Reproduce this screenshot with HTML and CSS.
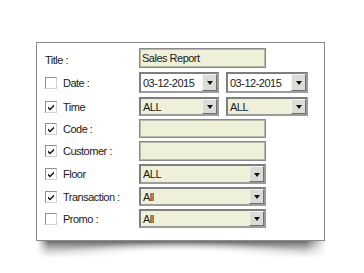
FILE: index.html
```html
<!DOCTYPE html>
<html lang="en">
<head>
    <meta charset="UTF-8">
    <title>Report filter</title>
    <link rel="stylesheet" href="styles.css">
</head>
<body>
    <div class="card">
        <div class="row r-title">
            <label class="lbl">Title :</label>
            <div class="box text wide">Sales Report</div>
        </div>
        <div class="row r-date">
            <label class="lbl"><span class="cb"></span>Date :</label>
            <div class="box select white small">03-12-2015<span class="btn"><i></i></span></div>
            <div class="box select white small2">03-12-2015<span class="btn"><i></i></span></div>
        </div>
        <div class="row r-time">
            <label class="lbl"><span class="cb on"><svg viewBox="0 0 8 8"><path d="M1 3.5 L3 5.5 L7 1.5 L7 3.5 L3 7.5 L1 5.5 Z"/></svg></span>Time</label>
            <div class="box select small">ALL<span class="btn"><i></i></span></div>
            <div class="box select small2">ALL<span class="btn"><i></i></span></div>
        </div>
        <div class="row r-code">
            <label class="lbl"><span class="cb on"><svg viewBox="0 0 8 8"><path d="M1 3.5 L3 5.5 L7 1.5 L7 3.5 L3 7.5 L1 5.5 Z"/></svg></span>Code :</label>
            <div class="box text wide"></div>
        </div>
        <div class="row r-cust">
            <label class="lbl"><span class="cb on"><svg viewBox="0 0 8 8"><path d="M1 3.5 L3 5.5 L7 1.5 L7 3.5 L3 7.5 L1 5.5 Z"/></svg></span>Customer :</label>
            <div class="box text wide"></div>
        </div>
        <div class="row r-floor">
            <label class="lbl"><span class="cb on"><svg viewBox="0 0 8 8"><path d="M1 3.5 L3 5.5 L7 1.5 L7 3.5 L3 7.5 L1 5.5 Z"/></svg></span>Floor</label>
            <div class="box select wide">ALL<span class="btn"><i></i></span></div>
        </div>
        <div class="row r-trans">
            <label class="lbl"><span class="cb on"><svg viewBox="0 0 8 8"><path d="M1 3.5 L3 5.5 L7 1.5 L7 3.5 L3 7.5 L1 5.5 Z"/></svg></span>Transaction :</label>
            <div class="box select wide">All<span class="btn"><i></i></span></div>
        </div>
        <div class="row r-promo">
            <label class="lbl"><span class="cb"></span>Promo :</label>
            <div class="box select wide">All<span class="btn"><i></i></span></div>
        </div>
    </div>
    <div class="shadow"></div>
</body>
</html>
```

FILE: styles.css
```css
body {
    margin: 0;
    background: #fff;
    font-family: "Liberation Sans", Arial, sans-serif;
    font-size: 11px;
    letter-spacing: -0.5px;
    color: #1a1a1a;
}

.card {
    box-sizing: border-box;
    width: 289px;
    height: 199px;
    margin: 42px 0 0 36px;
    padding: 5px 0 0 8px;
    border: 1px solid #8a8a8a;
    background: #fff;
    display: flex;
    flex-direction: column;
    gap: 3px;
}

.row {
    display: flex;
    align-items: center;
    height: 20px;
}
.r-date { height: 21px; margin-top: 1px; }
.r-time { height: 19px; margin-top: 1px; }
.r-code { height: 19px; }
.r-floor { height: 20px; }
.r-trans { height: 19px; }
.r-promo { height: 19px; }

.lbl {
    width: 94px;
    display: flex;
    align-items: center;
    gap: 6px;
}
.r-title .lbl { padding-top: 3px; }

.cb {
    box-sizing: border-box;
    width: 12px;
    height: 12px;
    border: 1px solid #8e8e8e;
    border-right-color: #d0d0d0;
    border-bottom-color: #d0d0d0;
    background: #fff;
    display: flex;
    align-items: center;
    justify-content: center;
}
.cb svg {
    width: 8px;
    height: 8px;
    fill: #111;
}

.box {
    box-sizing: border-box;
    height: 100%;
    display: flex;
    align-items: center;
    padding-left: 2px;
    background: #eff0d9;
    border: 2px solid #9c9c9c;
    border-top-color: #7e7e7e;
    border-left-color: #7e7e7e;
}
.text {
    border-width: 1px;
    border-color: #8a8a8a;
    box-shadow: inset 0 0 0 1px #b8b8a8;
}
.white { background: #fff; }
.wide { width: 127px; }
.small { width: 80px; }
.small2 { width: 82px; margin-left: 7px; }

.select { position: relative; }
.btn {
    box-sizing: border-box;
    width: 15px;
    height: 100%;
    margin-left: auto;
    background: #dcdcd6;
    border: 1px solid #f4f4f4;
    border-right-color: #707070;
    border-bottom-color: #707070;
    display: flex;
    align-items: center;
    justify-content: center;
}
.btn i {
    width: 0;
    height: 0;
    border-left: 3.5px solid transparent;
    border-right: 3.5px solid transparent;
    border-top: 4px solid #111;
    margin-top: 1px;
}

.shadow {
    width: 289px;
    height: 17px;
    margin-left: 37px;
    background:
        radial-gradient(ellipse 48% 95% at 50% 100%, #fff 45%, rgba(255,255,255,0) 100%),
        linear-gradient(to bottom, rgba(60,60,60,0.75), rgba(60,60,60,0.25) 55%, rgba(255,255,255,0));
    -webkit-mask-image: linear-gradient(to right, transparent, #000 4%, #000 93%, transparent);
    mask-image: linear-gradient(to right, transparent, #000 4%, #000 93%, transparent);
}
```
